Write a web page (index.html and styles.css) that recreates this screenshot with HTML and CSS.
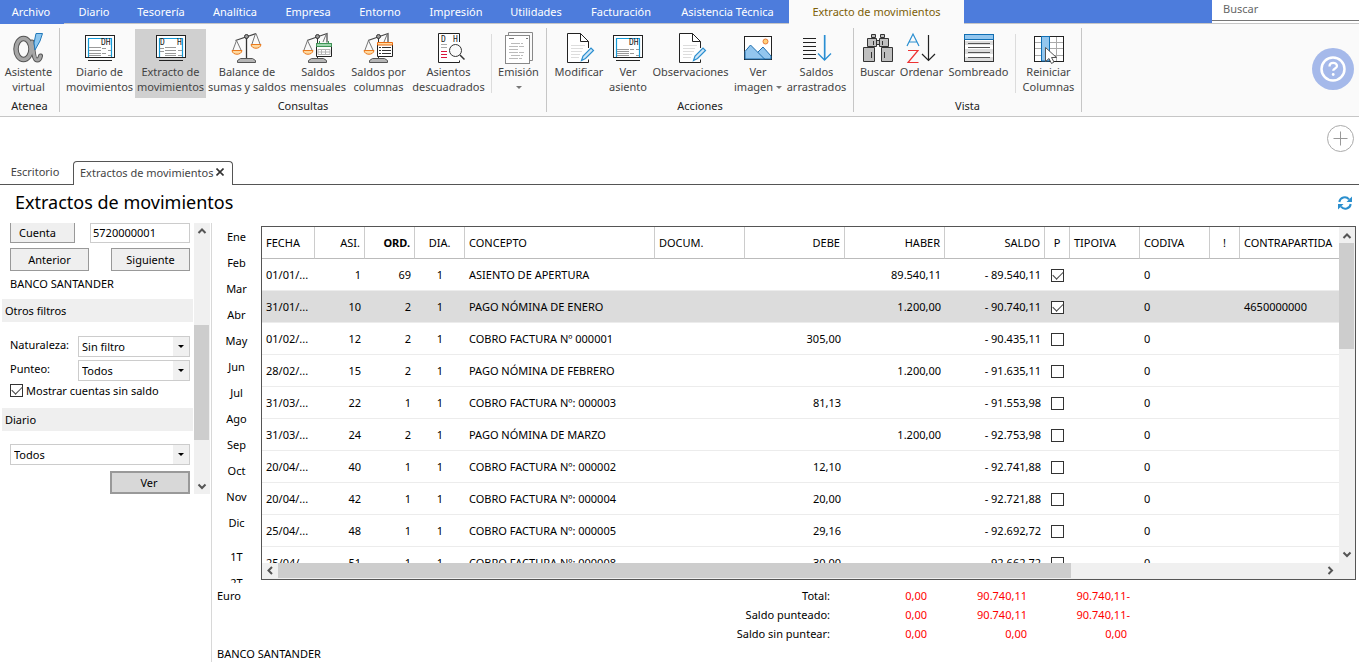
FILE: index.html
```html
<!DOCTYPE html>
<html lang="es">
<head>
<meta charset="utf-8">
<title>Extractos de movimientos</title>
<link rel="stylesheet" href="styles.css">
</head>
<body>
<svg class="defs" aria-hidden="true">
  <symbol id="scale" viewBox="0 0 32 32">
    <path d="M15.500 5v22" stroke="#333" stroke-width="1.300"/>
    <path d="M4.500 8.500 25 1.500" stroke="#444" fill="none" stroke-width="1.200"/>
    <path d="M5.500 8.500 2 18M5.500 8.500 10 18M24.500 1.500 21 12M25 1.500 29 12" stroke="#777" fill="none"/>
    <circle cx="15.500" cy="4.500" r="2" fill="#999" stroke="#333"/>
    <path d="M1 18.500h10c-.5 5-9.500 5-10 0zM20 12.500h10c-.5 5-9.500 5-10 0z" fill="#ffd9a0" stroke="#ea7a1e"/>
    <path d="M6.500 30.500v-2l3-2h12l3 2v2z" fill="#b5b5b5" stroke="#555"/>
  </symbol>
  <symbol id="halfscale" viewBox="0 0 32 32">
    <path d="M15.500 5v22" stroke="#333"/>
    <path d="M5 8.500 25 1.500v9" stroke="#444" fill="none" stroke-width="1.200"/>
    <path d="M5.500 8.500 2 18M5.500 8.500 10 18M24.500 1.500 21 10" stroke="#777" fill="none"/>
    <circle cx="15.500" cy="4.500" r="2" fill="#999" stroke="#333"/>
    <path d="M1 18.500h10c-.5 5-9.500 5-10 0z" fill="#ffd9a0" stroke="#ea7a1e"/>
    <path d="M6.500 30.500v-2l3-2h12l3 2v2z" fill="#b5b5b5" stroke="#555"/>
  </symbol>
  <symbol id="screen" viewBox="0 0 32 32">
    <rect x="1.500" y="3.500" width="29" height="22" fill="#fff" stroke="#222"/>
    <path d="M4.500 25V6.500h23V25" fill="none" stroke="#169bd7" stroke-width="1.200"/>
    <path d="M4 28.500h24" stroke="#222"/>
  </symbol>
  <symbol id="editdoc" viewBox="0 0 32 32">
    <path d="M25.500 16v-6.500L17.500 1.500h-13v29h21v-3" fill="#fff" stroke="#222"/>
    <path d="M17.500 1.500v8h8" fill="none" stroke="#222"/>
    <path d="M8 13.500h14M8 16.500h12M8 19.500h11M8 22.500h9M8 25.500h8" stroke="#ddd"/>
    <path d="m18.500 28.500 1.500-4.500 8-8 2.500 2.500-8 8z" fill="#cfe6f7" stroke="#2b8fd0" stroke-width="1.200"/>
  </symbol>
</svg>

<div class="page">
  <header class="topbar">
    <nav class="menu" aria-label="Menú principal">
      <button class="menu-tab menu-file">Archivo</button>
      <button class="menu-tab">Diario</button>
      <button class="menu-tab">Tesorería</button>
      <button class="menu-tab">Analítica</button>
      <button class="menu-tab">Empresa</button>
      <button class="menu-tab">Entorno</button>
      <button class="menu-tab">Impresión</button>
      <button class="menu-tab">Utilidades</button>
      <button class="menu-tab">Facturación</button>
      <button class="menu-tab">Asistencia Técnica</button>
      <button class="menu-tab menu-current">Extracto de movimientos</button>
    </nav>
    <input class="search" type="search" placeholder="Buscar" aria-label="Buscar">
  </header>

  <div class="ribbon">
    <section class="group" aria-label="Atenea">
      <div class="tools tools-atenea">
        <button class="tool">
          <svg class="icon" viewBox="0 0 32 32">
            <g fill="none" stroke-linecap="round">
              <ellipse cx="10.500" cy="17" rx="7.500" ry="10.500" stroke="#555" stroke-width="5.500"/>
              <path d="M19 10c1 8 2 18 5 18 2 0 3-1.500 3.500-4" stroke="#555" stroke-width="5"/>
              <ellipse cx="10.500" cy="17" rx="7.500" ry="10.500" stroke="#a6a6a6" stroke-width="3.500"/>
              <path d="M19 10c1 8 2 18 5 18 2 0 3-1.500 3.500-4" stroke="#a6a6a6" stroke-width="3"/>
            </g>
            <path d="M23 1.500h6.500L27 9l-5 9-1-7z" fill="#8cc6ef" stroke="#2279ba"/>
          </svg>
          <span>Asistente<br>virtual</span>
        </button>
      </div>
      <h2 class="group-name">Atenea</h2>
    </section>

    <section class="group" aria-label="Consultas">
      <div class="tools tools-consultas">
        <button class="tool">
          <svg class="icon" viewBox="0 0 32 32"><use href="#screen"/>
            <text x="17" y="13" class="dh">DH</text>
            <path d="M5 15.500h12M5 18.500h12M5 21.500h12M5 23.500h12M18 16.500h4M18 21.500h4M24 18.500h3M24 23.500h3" stroke="#999"/></svg>
          <span>Diario de<br>movimientos</span>
        </button>
        <button class="tool tool-on" aria-pressed="true">
          <svg class="icon" viewBox="0 0 32 32"><use href="#screen"/>
            <text x="5" y="13" class="dh">D</text><text x="22" y="13" class="dh">H</text>
            <path d="M5 16.500h4M5 19.500h4M10 15.500h11M10 18.500h11M10 21.500h11M10 23.500h11M23 18.500h4M23 23.500h4" stroke="#999"/></svg>
          <span>Extracto de<br>movimientos</span>
        </button>
        <button class="tool">
          <svg class="icon" viewBox="0 0 32 32"><use href="#scale"/></svg>
          <span>Balance de<br>sumas y saldos</span>
        </button>
        <button class="tool">
          <svg class="icon" viewBox="0 0 32 32"><use href="#halfscale"/>
            <path d="M14.500 11.500h15v13h-15z" fill="#fff" stroke="#222"/>
            <path d="M14.500 11.500h15v3h-15zM17.500 9v3M26.500 9v3" fill="#9fd5ae" stroke="#3e9556"/>
            <path d="M16 17.500h12v5H16zM16 20h12M19.500 17v6M23.500 17v6" fill="none" stroke="#b5b5b5"/></svg>
          <span>Saldos<br>mensuales</span>
        </button>
        <button class="tool">
          <svg class="icon" viewBox="0 0 32 32"><use href="#halfscale"/>
            <path d="M14.500 11.500h15v13h-15z" fill="#fff" stroke="#222"/>
            <path d="M14.500 10.500h15v2.500h-15z" fill="#ffd9a0" stroke="#ea6b0e"/>
            <path d="M16 15.500h2M16 18.500h2M16 21.500h2M19 15.500h9M19 18.500h9M19 21.500h9" stroke="#333"/></svg>
          <span>Saldos por<br>columnas</span>
        </button>
        <button class="tool">
          <svg class="icon" viewBox="0 0 32 32">
            <path d="M26.500 10v-8.500h-21v29h21v-2" fill="#fff" stroke="#222"/>
            <text x="8" y="10" class="dh">D</text><text x="20" y="10" class="dh">H</text>
            <path d="M8 12.500h6M8 15.500h6" stroke="#aaa"/>
            <path d="M8 19.500h6M8 22.500h6M8 25.500h6" stroke="#d9143a"/>
            <circle cx="22.500" cy="18.500" r="6" fill="#fafafa" stroke="#333"/>
            <path d="m27 23 4.500 4.500" stroke="#333" stroke-width="1.500"/></svg>
          <span>Asientos<br>descuadrados</span>
        </button>
        <i class="rule"></i>
        <button class="tool">
          <svg class="icon" viewBox="0 0 32 32">
            <path d="M5.500 3.500V.5h24v28h-3" fill="none" stroke="#888"/>
            <rect x="2.500" y="3.500" width="24" height="28" fill="#fff" stroke="#888"/>
            <path d="M6 6.500h5M23 6.500h2" stroke="#777"/>
            <path d="M8 11.500h12M6 14.500h15M6 17.500h10M6 20.500h15M8 23.500h12M6 26.500h13" stroke="#bbb" stroke-dasharray="9 1"/></svg>
          <span>Emisión<br><i class="caret"></i></span>
        </button>
      </div>
      <h2 class="group-name">Consultas</h2>
    </section>

    <section class="group" aria-label="Acciones">
      <div class="tools tools-acciones">
        <button class="tool">
          <svg class="icon" viewBox="0 0 32 32"><use href="#editdoc"/></svg>
          <span>Modificar</span>
        </button>
        <button class="tool">
          <svg class="icon" viewBox="0 0 32 32"><use href="#screen"/>
            <text x="17" y="13" class="dh">DH</text>
            <path d="M5 17.500h12M5 19.500h12M5 21.500h12M5 23.500h12M18 17.500h4M18 21.500h4M24 17.500h3M24 23.500h3" stroke="#999"/></svg>
          <span>Ver<br>asiento</span>
        </button>
        <button class="tool">
          <svg class="icon" viewBox="0 0 32 32"><use href="#editdoc"/></svg>
          <span>Observaciones</span>
        </button>
        <button class="tool">
          <svg class="icon" viewBox="0 0 32 32">
            <rect x="2.500" y="4.500" width="27" height="23" fill="#fff" stroke="#222"/>
            <path d="m15 21 6-6 8 9v3H18z" fill="#93c6ee" stroke="#1f6fae"/>
            <path d="M3 19.500 8.500 13l14 14H3z" fill="#93c6ee" stroke="#1f6fae"/>
            <circle cx="23.500" cy="9.500" r="2.500" fill="#ffd27a" stroke="#ea7a3a"/></svg>
          <span>Ver<br>imagen <i class="caret"></i></span>
        </button>
        <button class="tool">
          <svg class="icon" viewBox="0 0 32 32">
            <path d="M2 6.500h13M2 10.500h13M2 14.500h13M2 18.500h13M2 22.500h13M2 26.500h13" stroke="#222"/>
            <path d="M24 3v25" stroke="#9ccbec" stroke-width="2"/>
            <path d="M23.500 3v25M17 21.500l6.500 6.500 6.500-6.500" fill="none" stroke="#2a8ed2" stroke-width="1.300"/></svg>
          <span>Saldos<br>arrastrados</span>
        </button>
      </div>
      <h2 class="group-name">Acciones</h2>
    </section>

    <section class="group" aria-label="Vista">
      <div class="tools tools-vista">
        <button class="tool">
          <svg class="icon" viewBox="0 0 32 32">
            <path d="M9.500 2.500h4v3h-4zM18.500 2.500h4v3h-4zM5.500 6.500h9v8h-9zM17.500 6.500h9v8h-9zM14.500 8.500h3v4h-3zM1.500 15.500h11v14h-11zM19.500 15.500h11v14h-11z" fill="#bfbfbf" stroke="#333"/>
            <path d="M11.500 9v4M20.500 9v4M9.500 20v6M22.500 20v6" stroke="#333"/></svg>
          <span>Buscar</span>
        </button>
        <button class="tool">
          <svg class="icon" viewBox="0 0 32 32">
            <path d="m1 14 6-12 6 12M3 10h8" fill="none" stroke="#2b8fd0" stroke-width="1.200"/>
            <path d="M2 18.500h10L2 30.500h10.500" fill="none" stroke="#e33" stroke-width="1.200"/>
            <path d="M22.500 3v25M16 22l6.500 6.500L29 22" fill="none" stroke="#222" stroke-width="1.200"/></svg>
          <span>Ordenar</span>
        </button>
        <button class="tool">
          <svg class="icon" viewBox="0 0 32 32">
            <rect x="1.500" y="2.500" width="29" height="27" fill="#fff" stroke="#333"/>
            <path d="M2 9h28v4H2zM2 17h28v5H2zM2 25h28v4H2z" fill="#ddd"/>
            <path d="M5 11.500h22M5 15.500h22M5 20.500h22M5 25.500h22" stroke="#555"/>
            <path d="M1.500 2.500h29v5h-29z" fill="#93c6ee" stroke="#0f6fb5"/></svg>
          <span>Sombreado</span>
        </button>
        <i class="rule"></i>
        <button class="tool">
          <svg class="icon" viewBox="0 0 32 32">
            <rect x="1.500" y="4.500" width="29" height="25" fill="#fff" stroke="#222"/>
            <path d="M2 10.500h28M2 16.500h28M2 23.500h28M23.500 5v24" stroke="#aaa"/>
            <path d="M8.500 4.500h8v24.500h-8z" fill="#93c6ee" stroke="#0f6fb5"/>
            <path d="M12.500 15.500v14l3.500-3 2.500 5 2.500-1.500-2.500-4.500h5z" fill="#fff" stroke="#555"/></svg>
          <span>Reiniciar<br>Columnas</span>
        </button>
      </div>
      <h2 class="group-name">Vista</h2>
    </section>

    <button class="help" aria-label="Ayuda">
      <svg viewBox="0 0 42 42"><circle cx="21" cy="21" r="21" fill="#a5b9ea"/>
        <circle cx="21" cy="21" r="11.500" fill="none" stroke="#fff" stroke-width="2.500"/>
        <path d="M17.500 18.500c0-5 7.500-4.500 7.500-.5 0 2.500-3.800 2.500-3.800 4.800" fill="none" stroke="#fff" stroke-width="2.300"/>
        <circle cx="21.200" cy="26.500" r="1.400" fill="#fff"/></svg>
    </button>
  </div>

  <div class="tabstrip">
    <button class="doc-tab">Escritorio</button>
    <div class="doc-tab doc-current">Extractos de movimientos
      <button class="close" aria-label="Cerrar"><svg viewBox="0 0 8 8"><path d="m.5.500 7 7m0-7-7 7" stroke="#333" stroke-width="1.600"/></svg></button>
    </div>
    <button class="add" aria-label="Añadir">
      <svg viewBox="0 0 27 27"><circle cx="13.500" cy="13.500" r="13" fill="none" stroke="#aaa"/><path d="M6.500 13.500h14M13.500 6.500v14" stroke="#999"/></svg>
    </button>
  </div>

  <div class="titlebar">
    <h1>Extractos de movimientos</h1>
    <button class="refresh" aria-label="Actualizar">
      <svg viewBox="0 0 14 14"><path d="M1.300 6A5.500 5.500 0 0 1 11 3.300M12.700 8A5.500 5.500 0 0 1 3 10.700" fill="none" stroke="#2b8fce" stroke-width="2"/><path d="M14 .5V6H8.500zM0 13.500V8h5.500z" fill="#2b8fce"/></svg>
    </button>
  </div>

  <main class="work">
    <aside class="side">
      <div class="side-view">
        <form class="filters">
          <div class="pair"><button type="button" class="btn btn-cut">Cuenta</button><input class="account" value="5720000001" aria-label="Cuenta"></div>
          <div class="pair"><button type="button" class="btn">Anterior</button><button type="button" class="btn">Siguiente</button></div>
          <p class="bank">BANCO SANTANDER</p>
          <h3 class="band">Otros filtros</h3>
          <div class="field"><label for="nat">Naturaleza:</label><span class="drop"><select id="nat"><option>Sin filtro</option></select></span></div>
          <div class="field"><label for="pun">Punteo:</label><span class="drop"><select id="pun"><option>Todos</option></select></span></div>
          <label class="check"><input type="checkbox" class="tick" checked>Mostrar cuentas sin saldo</label>
          <h3 class="band">Diario</h3>
          <span class="drop drop-wide"><select aria-label="Diario"><option>Todos</option></select></span>
          <button type="button" class="btn btn-view">Ver</button>
        </form>
        <div class="vbar side-bar" aria-hidden="true">
          <svg class="arrow" viewBox="0 0 16 16"><path d="m4.500 10 3.500-3.500 3.500 3.500"/></svg>
          <i class="thumb"></i>
          <svg class="arrow arrow-end" viewBox="0 0 16 16"><path d="M4.500 6.500 8 10l3.500-3.500"/></svg>
        </div>
      </div>
    </aside>

    <div class="content">
      <div class="board">
        <nav class="months" aria-label="Periodo">
          <button>Ene</button><button>Feb</button><button>Mar</button><button>Abr</button><button>May</button><button>Jun</button><button>Jul</button><button>Ago</button><button>Sep</button><button>Oct</button><button>Nov</button><button>Dic</button><button class="quarter">1T</button><button>2T</button>
        </nav>
        <div class="grid-box">
          <div class="grid-view">
            <table class="grid">
              <colgroup><col class="c-date"><col class="c-50"><col class="c-50"><col class="c-50"><col class="c-190"><col class="c-90"><col class="c-100"><col class="c-100"><col class="c-100"><col class="c-25"><col class="c-70"><col class="c-70"><col class="c-30"><col></colgroup>
              <thead><tr><th>FECHA</th><th class="r">ASI.</th><th class="r b">ORD.</th><th class="c">DIA.</th><th>CONCEPTO</th><th>DOCUM.</th><th class="r">DEBE</th><th class="r">HABER</th><th class="r">SALDO</th><th class="c">P</th><th>TIPOIVA</th><th>CODIVA</th><th class="c">!</th><th>CONTRAPARTIDA</th></tr></thead>
              <tbody id="rows"></tbody>
            </table>
          </div>
          <div class="vbar grid-vbar" aria-hidden="true">
            <svg class="arrow" viewBox="0 0 16 16"><path d="m4.500 11 3.500-3.500 3.500 3.500"/></svg>
            <i class="thumb"></i>
            <svg class="arrow arrow-end" viewBox="0 0 16 16"><path d="M4.500 5.500 8 9l3.500-3.500"/></svg>
          </div>
          <div class="hbar" aria-hidden="true">
            <svg class="arrow" viewBox="0 0 16 16"><path d="M10 4 6.500 7.500 10 11"/></svg>
            <span class="track"><i class="thumb"></i></span>
            <svg class="arrow" viewBox="0 0 16 16"><path d="M6.500 4 10 7.500 6.500 11"/></svg>
          </div>
        </div>
      </div>
      <footer class="totals">
        <span class="currency">Euro</span>
        <table class="sums">
          <tr><th>Total:</th><td>0,00</td><td>90.740,11</td><td>90.740,11-</td></tr>
          <tr><th>Saldo punteado:</th><td>0,00</td><td>90.740,11</td><td>90.740,11-</td></tr>
          <tr><th>Saldo sin puntear:</th><td>0,00</td><td>0,00</td><td>0,00&nbsp;</td></tr>
        </table>
        <span class="bankname">BANCO SANTANDER</span>
      </footer>
    </div>
  </main>
</div>
<script src="rows.js"></script>
</body>
</html>
```
FILE: rows.js
```js
const rows = [
  ["01/01/...", 1, 69, "ASIENTO DE APERTURA", "", "89.540,11", "- 89.540,11", true, ""],
  ["31/01/...", 10, 2, "PAGO NÓMINA DE ENERO", "", "1.200,00", "- 90.740,11", true, "4650000000"],
  ["01/02/...", 12, 2, "COBRO FACTURA Nº 000001", "305,00", "", "- 90.435,11", false, ""],
  ["28/02/...", 15, 2, "PAGO NÓMINA DE FEBRERO", "", "1.200,00", "- 91.635,11", false, ""],
  ["31/03/...", 22, 1, "COBRO FACTURA Nº: 000003", "81,13", "", "- 91.553,98", false, ""],
  ["31/03/...", 24, 2, "PAGO NÓMINA DE MARZO", "", "1.200,00", "- 92.753,98", false, ""],
  ["20/04/...", 40, 1, "COBRO FACTURA Nº: 000002", "12,10", "", "- 92.741,88", false, ""],
  ["20/04/...", 42, 1, "COBRO FACTURA Nº: 000004", "20,00", "", "- 92.721,88", false, ""],
  ["25/04/...", 48, 1, "COBRO FACTURA Nº: 000005", "29,16", "", "- 92.692,72", false, ""],
  ["25/04/...", 51, 1, "COBRO FACTURA Nº: 000008", "30,00", "", "- 92.662,72", false, ""]
];

document.getElementById("rows").innerHTML = rows.map((r, i) => `
  <tr${i === 1 ? ' class="selected"' : ""}>
    <td>${r[0]}</td><td class="r">${r[1]}</td><td class="r">${r[2]}</td><td class="c">1</td>
    <td>${r[3]}</td><td></td><td class="r">${r[4]}</td><td class="r">${r[5]}</td><td class="r">${r[6]}</td>
    <td class="c"><input type="checkbox" class="tick" aria-label="Punteado"${r[7] ? " checked" : ""}></td>
    <td></td><td>0</td><td></td><td>${r[8]}</td>
  </tr>`).join("");
```
FILE: styles.css
```css
* { box-sizing: border-box; }
body, h1, h2, h3, p { margin: 0; font-weight: 400; }
body { background: #fff; color: #000; font: 11px/15px "Noto Sans", "Open Sans", sans-serif; }
button, input, select { font: inherit; color: inherit; margin: 0; }
button { border: 0; padding: 0; background: none; white-space: nowrap; }
svg { display: block; }
i { font-style: normal; }
.defs { position: absolute; width: 0; height: 0; }
.page { display: flex; flex-direction: column; height: 100vh; overflow: hidden; }

.topbar { display: flex; justify-content: space-between; flex: none; height: 24px; background: #4d7cdc; border-bottom: 1px solid #c6c6c6; }
.menu { display: grid; grid-template-columns: 64px 60px 74px 74px 72px 72px 80px 80px 90px 123px 175px; }
.menu-tab { height: 23px; color: #fff; }
.menu-file { height: 24px; padding: 0 2px 2px 0; background: #4d7cdc; }
.menu-current { height: 24px; padding-bottom: 2px; background: #fafafa; color: #7d6008; }
.search { width: 147px; height: 21px; padding: 0 11px 3px; border: 0; border-bottom: 1px solid #777; border-radius: 0; outline: 0; background: #fff; box-shadow: 0 2px #fff; appearance: none; }
.search::placeholder { color: #666; opacity: 1; }

.ribbon { display: flex; flex: none; height: 93px; background: #fafafa; border-bottom: 1px solid #c6c6c6; }
.group { display: flex; flex-direction: column; margin: 4px 0; border-right: 1px solid #c6c6c6; }
.tools { display: grid; flex: 1; padding: 1px 4px 0; color: #444; }
.tools-atenea { grid-template-columns: 57px; padding: 1px 2px 0 0; }
.tools-consultas { grid-template-columns: 71px 71px 82px 60px 61px 79px 7px 47px; }
.tools-acciones { grid-template-columns: 56px 42px 83px 52px 65px; }
.tools-vista { grid-template-columns: 39px 49px 65px 9px 57px; }
.tool { display: flex; flex-direction: column; align-items: center; height: 69px; padding-top: 3px; }
.tool span { display: block; white-space: nowrap; line-height: 15px; }
.tool-on { background: #d0d0d0; }
.icon { width: 32px; height: 32px; flex: none; overflow: visible; }
.dh { font: 8px "DejaVu Sans Mono", monospace; fill: #222; }
.rule { justify-self: center; width: 1px; height: 59px; margin-top: 5px; background: #dcdcdc; }
.caret { display: inline-block; border: 3px solid transparent; border-top-color: #777; border-bottom: 0; vertical-align: 2px; }
.group-name { font-size: 11px; line-height: 12px; text-align: center; color: #222; }
.help { align-self: center; width: 42px; margin: 0 5px 2px auto; }

.tabstrip { display: flex; align-items: flex-end; flex: none; height: 68px; border-bottom: 1px solid #555; }
.doc-tab { width: 73px; height: 24px; padding: 0 3px 1px 0; color: #444; text-align: center; }
.doc-current { display: flex; align-items: center; justify-content: space-between; width: 160px; margin-bottom: -1px; padding: 0 8px 3px 6px; background: #fff; border: 1px solid #555; border-bottom: 0; border-radius: 4px 4px 0 0; white-space: nowrap; }
.close { width: 8px; }
.add { align-self: flex-start; width: 27px; margin: 8px 5px 0 auto; }

.titlebar { display: flex; align-items: center; justify-content: space-between; flex: none; height: 38px; padding: 0 7px 2px 15px; }
.titlebar h1 { font-size: 18px; line-height: 24px; padding-bottom: 2px; }
.refresh { width: 14px; }

.work { display: flex; flex: 1; min-height: 0; }
.side { flex: none; width: 212px; border-right: 1px solid #d8d8d8; }
.side-view { display: flex; justify-content: space-between; height: 271px; padding-right: 1px; overflow: hidden; }
.filters { display: flex; flex-direction: column; flex: 1; padding: 0 1px 0 2px; }
.pair { display: grid; grid-template-columns: auto auto; justify-content: space-between; padding: 0 3px 5px 8px; }
.btn { width: 79px; height: 23px; background: #efefef; border: 1px solid #999; }
.btn-cut { width: 65px; height: 20px; padding-right: 10px; border-top: 0; }
.account { width: 100px; height: 20px; padding: 0 2px 1px; border: 1px solid #ccc; outline: 0; background: #fff; }
.bank { padding: 0 8px; line-height: 15px; margin: 0 0 8px; }
.band { height: 23px; padding-left: 3px; background: #efefef; font-size: 11px; line-height: 23px; }
.band + .field { margin-top: 14px; }
.field { display: flex; justify-content: space-between; align-items: flex-start; padding: 0 3px 3px 8px; }
.field label { line-height: 18px; }
.drop { position: relative; display: block; width: 112px; height: 21px; }
.drop select { display: block; width: 100%; height: 100%; padding: 0 3px; border: 1px solid #ccc; border-radius: 0; outline: 0; background: linear-gradient(#f0f0f0, #f0f0f0) right / 16px 100% no-repeat #fff; appearance: none; }
.drop::after { content: ""; position: absolute; right: 6px; top: 9px; border: 3px solid transparent; border-top-color: #000; border-bottom: 0; pointer-events: none; }
.drop-wide { width: 180px; margin: 13px 0 6px 8px; }
.check { display: flex; align-items: center; gap: 3px; height: 13px; padding-left: 8px; margin-bottom: 11px; white-space: nowrap; }
.tick { appearance: none; flex: none; display: inline-flex; align-items: center; justify-content: center; width: 13px; height: 13px; border: 1px solid #333; background: #fff; vertical-align: middle; }
.tick:checked::before { content: ""; width: 9px; height: 5px; margin-bottom: 3px; border: solid #444; border-width: 0 0 1px 1px; transform: rotate(-45deg); }
.btn-view { align-self: flex-end; width: 80px; margin-right: 3px; padding-right: 2px; background: #d8d8d8; border: 2px solid #999; }

.vbar { display: flex; flex-direction: column; align-items: flex-start; width: 16px; background: #f0f0f0; }
.vbar .thumb { width: 15px; background: #cdcdcd; }
.arrow { flex: none; width: 16px; height: 16px; fill: none; stroke: #555; stroke-width: 2; }
.arrow-end { margin-top: auto; }
.side-bar .thumb { height: 115px; margin-top: 86px; }

.content { display: flex; flex-direction: column; flex: 1; min-width: 0; }
.board { display: flex; flex: 1; min-height: 0; overflow: hidden; }
.months { display: flex; flex-direction: column; flex: none; width: 49px; overflow: hidden; }
.months button { flex: none; height: 26px; }
.months .quarter { margin-top: 8px; }
.grid-box { display: grid; grid-template: minmax(0, 1fr) 16px / minmax(0, 1fr) 16px; flex: 1; margin: 3px 3px 3px 0; border: 1px solid #555; }
.grid-view { overflow: hidden; }
.grid { width: 100%; table-layout: fixed; border-collapse: separate; border-spacing: 0; }
.grid th, .grid td { height: 32px; padding: 0 4px 1px; border-bottom: 1px solid #ececec; text-align: left; font-weight: 400; white-space: nowrap; overflow: hidden; }
.grid th { border-bottom-color: #bbb; border-right: 1px solid #ccc; }
.grid th:last-child { border-right: 0; padding-right: 0; }
.grid .r { text-align: right; }
.grid .c { text-align: center; padding: 0 0 1px; }
.grid .b { font-weight: 700; }
.grid .selected td { background: #dcdcdc; }
.c-date { width: 53px; }
.c-25 { width: 25px; }
.c-30 { width: 30px; }
.c-50 { width: 50px; }
.c-70 { width: 70px; }
.c-90 { width: 90px; }
.c-100 { width: 100px; }
.c-190 { width: 190px; }
.grid-vbar .thumb { height: 106px; }
.hbar { grid-column: 1 / -1; display: flex; padding-right: 17px; background: #f0f0f0; }
.track { flex: 1; padding: 0 0 1px; }
.track .thumb { display: block; width: 76%; height: 100%; background: #cdcdcd; }

.totals { display: grid; grid-template: 60px auto / 1fr; flex: none; height: 79px; padding: 3px 5px 0; }
.currency, .sums { grid-area: 1 / 1; align-self: start; }
.currency { line-height: 19px; }
.sums { width: 913px; border-spacing: 0; }
.sums th { font-weight: 400; text-align: right; height: 19px; padding: 0; }
.sums td { width: 100px; padding: 0 3px 0 0; text-align: right; color: #f00; }
.sums td:last-child { padding: 0; }
```
